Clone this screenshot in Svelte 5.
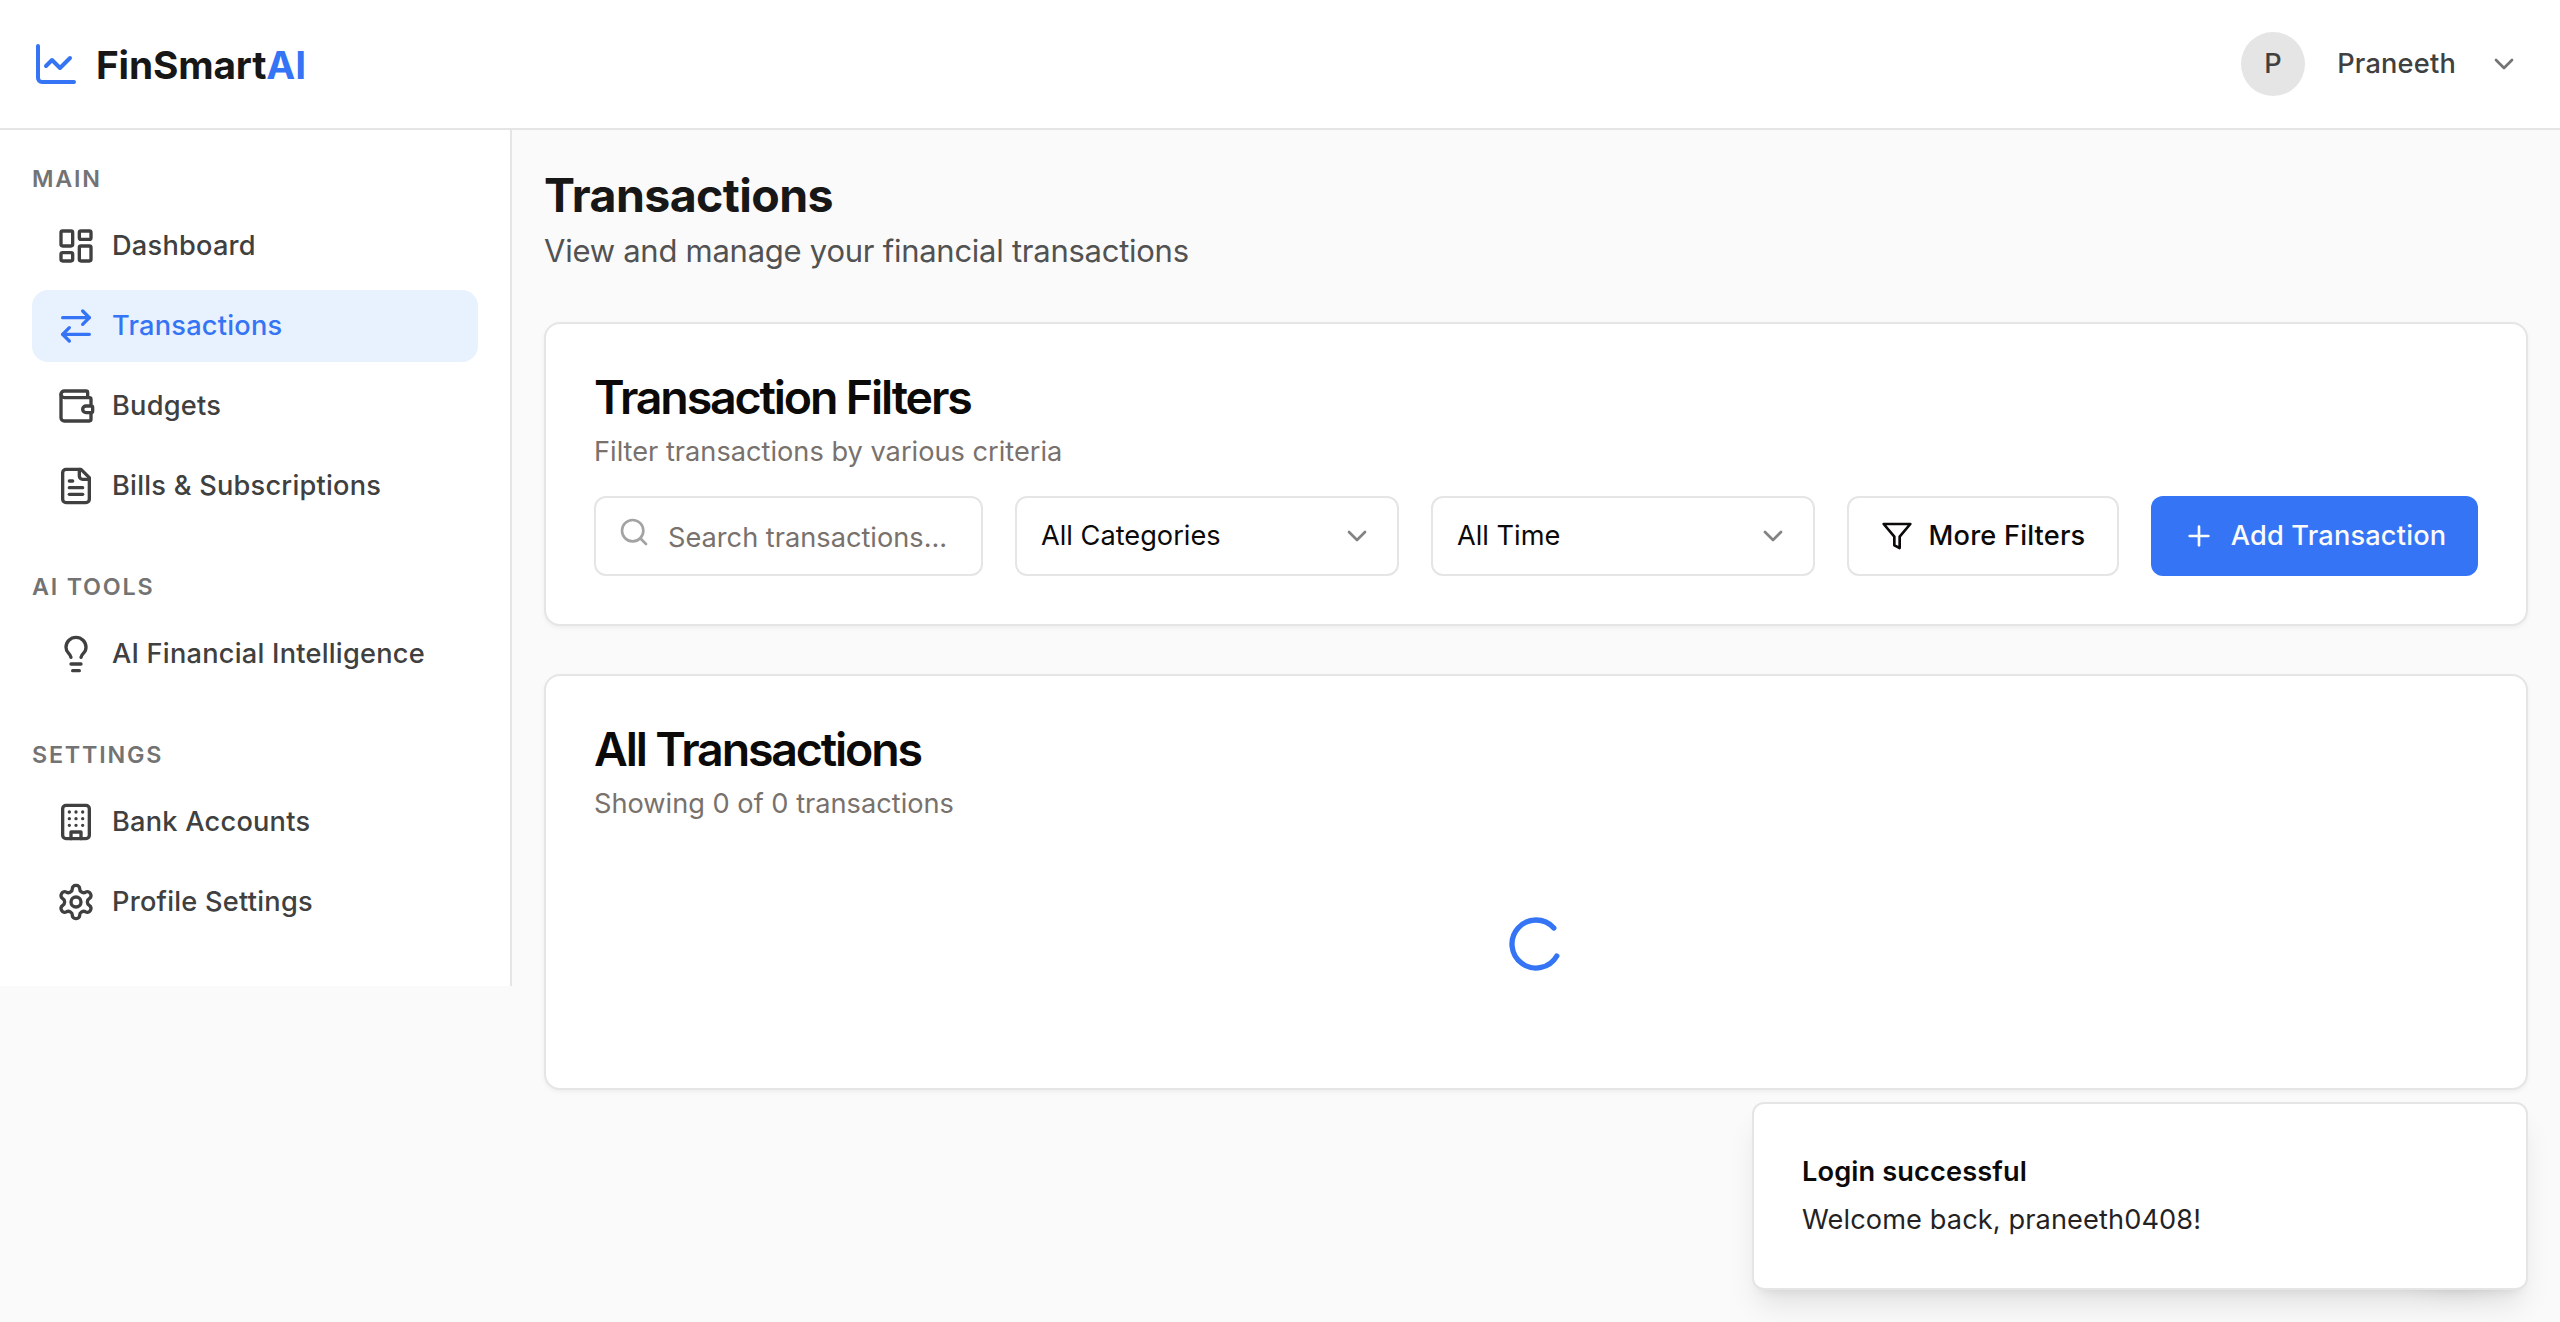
<script>
  const icons = {
    chart: '<path d="M3 3v16a2 2 0 0 0 2 2h16"/><path d="m19 9-5 5-4-4-3 3"/>',
    dashboard:
      '<rect x="3" y="3" width="7" height="9" rx="1"/><rect x="14" y="3" width="7" height="5" rx="1"/><rect x="14" y="12" width="7" height="9" rx="1"/><rect x="3" y="16" width="7" height="5" rx="1"/>',
    arrows: '<path d="m16 3 4 4-4 4"/><path d="M20 7H4"/><path d="m8 21-4-4 4-4"/><path d="M4 17h16"/>',
    wallet:
      '<path d="M19 7V4a1 1 0 0 0-1-1H5a2 2 0 0 0 0 4h15a1 1 0 0 1 1 1v4h-3a2 2 0 0 0 0 4h3a1 1 0 0 0 1-1v-2a1 1 0 0 0-1-1"/><path d="M3 5v14a2 2 0 0 0 2 2h15a1 1 0 0 0 1-1v-4"/>',
    file: '<path d="M15 2H6a2 2 0 0 0-2 2v16a2 2 0 0 0 2 2h12a2 2 0 0 0 2-2V7Z"/><path d="M14 2v4a2 2 0 0 0 2 2h4"/><path d="M10 9H8"/><path d="M16 13H8"/><path d="M16 17H8"/>',
    bulb: '<path d="M15 14c.2-1 .7-1.7 1.5-2.5 1-.9 1.5-2.2 1.5-3.5A6 6 0 0 0 6 8c0 1 .2 2.2 1.5 3.5.7.7 1.3 1.5 1.5 2.5"/><path d="M9 18h6"/><path d="M10 22h4"/>',
    building:
      '<rect x="4" y="2" width="16" height="20" rx="2"/><path d="M9 22v-4h6v4"/><path d="M8 6h.01M16 6h.01M12 6h.01M12 10h.01M12 14h.01M16 10h.01M16 14h.01M8 10h.01M8 14h.01"/>',
    settings:
      '<path d="M12.22 2h-.44a2 2 0 0 0-2 2v.18a2 2 0 0 1-1 1.73l-.43.25a2 2 0 0 1-2 0l-.15-.08a2 2 0 0 0-2.73.73l-.22.38a2 2 0 0 0 .73 2.73l.15.1a2 2 0 0 1 1 1.72v.51a2 2 0 0 1-1 1.74l-.15.09a2 2 0 0 0-.73 2.73l.22.38a2 2 0 0 0 2.73.73l.15-.08a2 2 0 0 1 2 0l.43.25a2 2 0 0 1 1 1.73V20a2 2 0 0 0 2 2h.44a2 2 0 0 0 2-2v-.18a2 2 0 0 1 1-1.73l.43-.25a2 2 0 0 1 2 0l.15.08a2 2 0 0 0 2.73-.73l.22-.39a2 2 0 0 0-.73-2.73l-.15-.08a2 2 0 0 1-1-1.74v-.5a2 2 0 0 1 1-1.74l.15-.09a2 2 0 0 0 .73-2.73l-.22-.38a2 2 0 0 0-2.73-.73l-.15.08a2 2 0 0 1-2 0l-.43-.25a2 2 0 0 1-1-1.73V4a2 2 0 0 0-2-2z"/><circle cx="12" cy="12" r="3"/>',
    search: '<circle cx="11" cy="11" r="8"/><path d="m21 21-4.3-4.3"/>',
    chevron: '<path d="m6 9 6 6 6-6"/>',
    filter: '<polygon points="22 3 2 3 10 12.46 10 19 14 21 14 12.46 22 3"/>',
    plus: '<path d="M5 12h14"/><path d="M12 5v14"/>',
    loader: '<path d="M21 12a9 9 0 1 1-6.219-8.56"/>'
  };

  const sections = [
    {
      title: 'Main',
      items: [
        { label: 'Dashboard', icon: 'dashboard' },
        { label: 'Transactions', icon: 'arrows', active: true },
        { label: 'Budgets', icon: 'wallet' },
        { label: 'Bills & Subscriptions', icon: 'file' }
      ]
    },
    { title: 'AI Tools', items: [{ label: 'AI Financial Intelligence', icon: 'bulb' }] },
    {
      title: 'Settings',
      items: [
        { label: 'Bank Accounts', icon: 'building' },
        { label: 'Profile Settings', icon: 'settings' }
      ]
    }
  ];

  const selects = ['All Categories', 'All Time'];
</script>

{#snippet icon(name, cls)}
  <svg class="icon {cls}" viewBox="0 0 24 24" aria-hidden="true">{@html icons[name]}</svg>
{/snippet}

<header class="topbar">
  <div class="brand">
    {@render icon('chart', 'xl blue')}
    <span class="brand-name">FinSmart<span class="blue">AI</span></span>
  </div>
  <div class="user">
    <span class="avatar">P</span>
    <span class="user-name">Praneeth</span>
    {@render icon('chevron', 'sm grey')}
  </div>
</header>

<div class="layout">
  <aside class="sidebar">
    {#each sections as section}
      <nav class="section">
        <h2 class="section-title">{section.title}</h2>
        <ul class="links">
          {#each section.items as item}
            <li class="link" class:active={item.active}>
              {@render icon(item.icon, 'md')}
              <span>{item.label}</span>
            </li>
          {/each}
        </ul>
      </nav>
    {/each}
  </aside>

  <main class="main">
    <div class="page-head">
      <h1 class="page-title">Transactions</h1>
      <p class="page-sub">View and manage your financial transactions</p>
    </div>

    <section class="card">
      <h3 class="card-title">Transaction Filters</h3>
      <p class="card-sub">Filter transactions by various criteria</p>
      <div class="controls">
        <div class="search">
          {@render icon('search', 'sm search-icon')}
          <input class="search-input" type="text" placeholder="Search transactions..." />
        </div>
        {#each selects as label}
          <button class="control select">
            <span>{label}</span>
            {@render icon('chevron', 'sm faded')}
          </button>
        {/each}
        <button class="control button">
          {@render icon('filter', 'sm')}
          <span>More Filters</span>
        </button>
        <button class="control button primary">
          {@render icon('plus', 'sm')}
          <span>Add Transaction</span>
        </button>
      </div>
    </section>

    <section class="card">
      <h3 class="card-title">All Transactions</h3>
      <p class="card-sub">Showing 0 of 0 transactions</p>
      <div class="loading">
        {@render icon('loader', 'spinner blue')}
      </div>
    </section>
  </main>
</div>

<!-- Floating assistant button; the toast covers it while open -->
<button class="fab" aria-label="Assistant"></button>

<div class="toast" role="status">
  <div class="toast-title">Login successful</div>
  <div class="toast-text">Welcome back, praneeth0408!</div>
</div>

<style>
  :global(body) {
    margin: 0;
    background: #fafafa;
    color: #0c0a09;
    font-family: Inter, 'Liberation Sans', sans-serif;
    font-size: 27.2px;
    line-height: 40px;
    overflow: hidden;
    -webkit-font-smoothing: antialiased;
  }
  h1, h2, h3, p, ul {
    margin: 0;
    padding: 0;
  }
  *, *::before, *::after {
    box-sizing: border-box;
  }

  .icon {
    display: block;
    flex: none;
    fill: none;
    stroke: currentColor;
    stroke-width: 2;
    stroke-linecap: round;
    stroke-linejoin: round;
  }
  .sm { width: 32px; height: 32px; }
  .md { width: 40px; height: 40px; }
  .xl { width: 48px; height: 48px; }
  .blue { color: #3574f5; }
  .grey { color: #737373; }
  .faded { opacity: 0.5; }

  .topbar {
    display: flex;
    align-items: center;
    justify-content: space-between;
    height: 130px;
    padding: 0 40px 0 32px;
    background: #fff;
    border-bottom: 2px solid #e5e5e5;
  }
  .brand {
    display: flex;
    align-items: center;
    gap: 16px;
  }
  .brand-name {
    padding-top: 2px;
    font-size: 38.8px;
    line-height: 56px;
    font-weight: 700;
    letter-spacing: -0.15px;
    color: #171717;
  }
  .user {
    display: flex;
    align-items: center;
    gap: 32px;
    font-weight: 500;
    letter-spacing: 0.2px;
    color: #404040;
  }
  .avatar {
    display: grid;
    place-items: center;
    width: 64px;
    height: 64px;
    border-radius: 50%;
    background: #e5e5e5;
  }

  .layout {
    display: flex;
    align-items: flex-start;
  }
  .sidebar {
    flex: none;
    display: flex;
    flex-direction: column;
    gap: 48px;
    width: 512px;
    padding: 32px 32px 48px;
    background: #fff;
    border-right: 2px solid #e5e5e5;
  }
  .section-title {
    margin-bottom: 16px;
    padding-top: 2px;
    font-size: 23.3px;
    line-height: 30px;
    font-weight: 600;
    letter-spacing: 1.8px;
    text-transform: uppercase;
    color: #737373;
  }
  .links {
    display: flex;
    flex-direction: column;
    gap: 8px;
    list-style: none;
  }
  .link {
    display: flex;
    align-items: center;
    gap: 16px;
    height: 72px;
    padding: 0 24px;
    border-radius: 16px;
    font-weight: 500;
    letter-spacing: 0.23px;
    color: #404040;
  }
  .link.active {
    background: #e8f1fe;
    color: #3574f5;
  }

  .main {
    flex: 1;
    min-width: 0;
    display: flex;
    flex-direction: column;
    gap: 48px;
    padding: 32px;
  }
  .page-title {
    padding-top: 2px;
    font-size: 46.5px;
    line-height: 62px;
    font-weight: 700;
    letter-spacing: -0.6px;
    color: #171717;
  }
  .page-sub {
    padding-top: 2px;
    font-size: 31px;
    line-height: 46px;
    letter-spacing: -0.26px;
    color: #525252;
  }

  .card {
    padding: 48px;
    background: #fff;
    border: 2px solid #e5e5e5;
    border-radius: 16px;
    box-shadow: 0 2px 4px rgba(0, 0, 0, 0.05);
  }
  .card-title {
    margin-bottom: 12px;
    padding-top: 2px;
    font-size: 46.5px;
    line-height: 46px;
    font-weight: 600;
    letter-spacing: -2.15px;
  }
  .card-sub {
    margin-bottom: 24px;
    color: #78716c;
  }

  .controls {
    display: flex;
    gap: 32px;
  }
  .search {
    position: relative;
    flex: 1;
    min-width: 0;
  }
  .search :global(.search-icon) {
    position: absolute;
    left: 24px;
    top: 20px;
    color: #a3a3a3;
  }
  .search-input {
    display: block;
    width: 100%;
    height: 80px;
    padding: 2px 24px 0 72px;
    background: #fff;
    border: 2px solid #e5e5e5;
    border-radius: 12px;
    font: inherit;
    outline: none;
  }
  .search-input::placeholder {
    color: #78716c;
    opacity: 1;
  }
  .control {
    flex: none;
    display: flex;
    align-items: center;
    height: 80px;
    background: #fff;
    border: 2px solid #e5e5e5;
    border-radius: 12px;
    font: inherit;
    color: #0c0a09;
    white-space: nowrap;
  }
  .select {
    justify-content: space-between;
    width: 384px;
    padding: 0 24px;
  }
  .button {
    justify-content: center;
    gap: 16px;
    width: 272px;
    padding: 0;
    font-weight: 500;
    letter-spacing: 0.18px;
  }
  .primary {
    width: 327px;
    border: 0;
    background: #3574f5;
    color: #fafaf9;
  }

  .loading {
    display: flex;
    justify-content: center;
    padding: 64px 0;
  }
  .spinner {
    width: 64px;
    height: 64px;
    transform: rotate(30deg);
  }

  .fab {
    position: absolute;
    right: 48px;
    bottom: 48px;
    width: 112px;
    height: 112px;
    border: 0;
    border-radius: 50%;
    background: #3574f5;
    box-shadow: 0 20px 30px -6px rgba(0, 0, 0, 0.1), 0 8px 12px -8px rgba(0, 0, 0, 0.1);
  }
  .toast {
    position: absolute;
    right: 32px;
    bottom: 32px;
    width: 776px;
    padding: 48px;
    background: #fff;
    border: 2px solid #e5e5e5;
    border-radius: 12px;
    box-shadow: 0 20px 30px -6px rgba(0, 0, 0, 0.1), 0 8px 12px -8px rgba(0, 0, 0, 0.1);
  }
  .toast-title {
    margin-bottom: 8px;
    font-weight: 600;
    letter-spacing: 0.12px;
  }
  .toast-text {
    letter-spacing: 0.1px;
    opacity: 0.9;
  }
</style>
